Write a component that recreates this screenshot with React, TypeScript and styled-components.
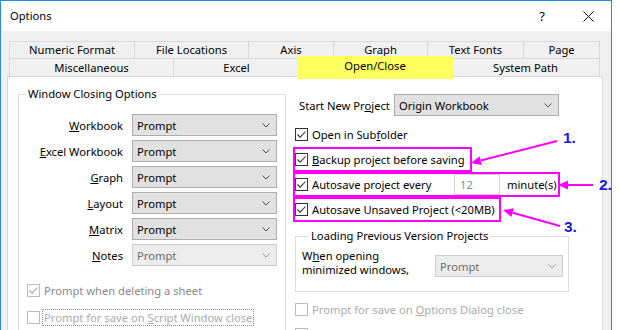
import React from "react";
import styled, { createGlobalStyle } from "styled-components";

const GlobalStyle = createGlobalStyle`
  html, body {
    margin: 0;
    padding: 0;
    background: #fff;
  }
  body {
    font-family: "Noto Sans", "Open Sans", sans-serif;
    font-size: 11.2px;
    color: #000;
    overflow: hidden;
  }
  * {
    box-sizing: border-box;
  }
`;

const Stage = styled.div`
  position: relative;
  width: 620px;
  height: 330px;
  overflow: hidden;
`;

const Window = styled.div`
  width: 612px;
  height: 330px;
  border: 1px solid #2b88d8;
  border-bottom: none;
  background: #f0f0f0;
  display: flex;
  flex-direction: column;
`;

const TitleBar = styled.div`
  flex: 0 0 30px;
  background: #fff;
  display: flex;
  align-items: center;
  padding-left: 9px;
`;

const TitleText = styled.span`
  line-height: 16px;
`;

const CaptionButtons = styled.div`
  margin-left: auto;
  display: flex;
`;

const CaptionButton = styled.div`
  width: 46px;
  height: 30px;
  display: flex;
  align-items: center;
  justify-content: center;
  font-size: 13px;
`;

const Body = styled.div`
  flex: 1;
  display: flex;
  flex-direction: column;
  padding: 10px 0 0 8px;
  min-height: 0;
`;

const TabStrip = styled.div`
  width: 591px;
`;

const TabRow = styled.div<{ $h: number }>`
  display: flex;
  height: ${(p) => p.$h}px;
`;

const Tab = styled.div<{ $w: number; $last?: boolean }>`
  flex: 0 0 ${(p) => p.$w}px;
  border: 1px solid #d9d9d9;
  border-bottom: none;
  border-right: ${(p) => (p.$last ? "1px solid #d9d9d9" : "none")};
  display: flex;
  align-items: center;
  justify-content: center;
  line-height: 16px;
  white-space: nowrap;
`;

const ActiveTab = styled.div<{ $w: number }>`
  position: relative;
  z-index: 2;
  flex: 0 0 ${(p) => p.$w + 4}px;
  margin: -2px -2px 0;
  height: 23px;
  background: #ffff5e;
  display: flex;
  justify-content: center;
  padding-top: 2px;
  line-height: 16px;
`;

const Panel = styled.div`
  flex: 1;
  margin-left: -2px;
  width: 596px;
  border: 1px solid #d9d9d9;
  border-bottom: none;
  background: #fff;
  padding: 9px 0 0 10px;
  display: grid;
  grid-template-columns: 268px 1fr;
  column-gap: 7px;
  align-items: start;
`;

const GroupBox = styled.fieldset<{ $w?: number }>`
  margin: 0;
  padding: 0;
  border: 1px solid #dcdcdc;
  min-width: 0;
  ${(p) => (p.$w ? `width: ${p.$w}px;` : "")}
`;

const GroupTitle = styled.legend`
  margin-left: 7px;
  padding: 0 2px;
  line-height: 16px;
`;

const ClosingBox = styled(GroupBox)`
  padding-bottom: 40px;
`;

const ComboGrid = styled.div`
  display: grid;
  grid-template-columns: 104px 145px;
  grid-auto-rows: 22px;
  column-gap: 9px;
  row-gap: 4px;
  margin-top: 12px;
`;

const FieldLabel = styled.div`
  display: flex;
  align-items: center;
  justify-content: flex-end;
  white-space: nowrap;
`;

const ComboBox = styled.div<{ $w?: number; $disabled?: boolean }>`
  height: 22px;
  ${(p) => (p.$w ? `width: ${p.$w}px;` : "")}
  border: 1px solid ${(p) => (p.$disabled ? "#cccccc" : "#adadad")};
  background: ${(p) => (p.$disabled ? "#ececec" : "#e1e1e1")};
  color: ${(p) => (p.$disabled ? "#6d6d6d" : "#000")};
  display: flex;
  align-items: center;
  justify-content: space-between;
  padding: 0 6px 0 4px;
  white-space: nowrap;
`;

const Chevron = ({ color }: { color: string }) => (
  <svg width="8" height="5" viewBox="0 0 8 5">
    <path d="M0.5 0.5 L4 4 L7.5 0.5" fill="none" stroke={color} strokeWidth="1" />
  </svg>
);

const Combo = ({
  value,
  width,
  disabled,
}: {
  value: string;
  width?: number;
  disabled?: boolean;
}) => (
  <ComboBox $w={width} $disabled={disabled}>
    <span>{value}</span>
    <Chevron color={disabled ? "#9a9a9a" : "#505050"} />
  </ComboBox>
);

const LeftChecks = styled.div`
  display: flex;
  flex-direction: column;
  gap: 9px;
  margin-top: 15px;
  padding-left: 8px;
`;

const LeftCheckRow = styled.div`
  display: flex;
  align-items: center;
  height: 18px;
  gap: 2px;
`;

type Tone = "normal" | "dim" | "faint";

const toneText: Record<Tone, string> = {
  normal: "#000",
  dim: "#8a8a8a",
  faint: "#ababab",
};

const BoxFrame = styled.span<{ $tone: Tone }>`
  flex: 0 0 13px;
  width: 13px;
  height: 13px;
  border: 1px solid ${(p) => (p.$tone === "normal" ? "#333" : "#bcbcbc")};
  background: #fff;
  display: inline-flex;
  align-items: center;
  justify-content: center;
`;

const CheckBox = ({ checked, tone = "normal" }: { checked?: boolean; tone?: Tone }) => (
  <BoxFrame $tone={tone}>
    {checked && (
      <svg width="11" height="11" viewBox="0 0 11 11">
        <path
          d="M1.5 5.5 L4.2 8.2 L9.5 2.5"
          fill="none"
          stroke={tone === "normal" ? "#333" : "#a5a5a5"}
          strokeWidth="1.1"
        />
      </svg>
    )}
  </BoxFrame>
);

const CheckText = styled.span<{ $tone: Tone; $focus?: boolean; $w?: number }>`
  color: ${(p) => toneText[p.$tone]};
  border: 1px ${(p) => (p.$focus ? "dotted #8c8c8c" : "solid transparent")};
  padding: 0 1px;
  line-height: 15px;
  white-space: nowrap;
  ${(p) => (p.$w ? `width: ${p.$w}px;` : "")}
`;

const RightCol = styled.div`
  display: flex;
  flex-direction: column;
  align-items: flex-start;
`;

const StartRow = styled.div`
  display: flex;
  align-items: center;
  gap: 5px;
  margin-top: 8px;
  padding-left: 6px;
`;

const StartLabel = styled.span`
  width: 90px;
  white-space: nowrap;
`;

const CheckRow = styled.div<{ $hl?: boolean; $mt?: number; $pr?: number }>`
  display: flex;
  align-items: center;
  height: 25px;
  gap: 2px;
  margin-top: ${(p) => p.$mt ?? 0}px;
  border: 2px solid ${(p) => (p.$hl ? "#ff00ff" : "transparent")};
  padding-right: ${(p) => p.$pr ?? 3}px;
`;

const NumberField = styled.div`
  width: 46px;
  height: 21px;
  margin-left: 2px;
  border: 1px solid #d4d4d4;
  background: #fff;
  color: #8c8c8c;
  display: flex;
  align-items: center;
  padding-left: 5px;
`;

const Unit = styled.span`
  margin-left: 5px;
  white-space: nowrap;
`;

const LoadingBox = styled(GroupBox)`
  margin: 6px 0 0 2px;
  padding: 5px 5px 14px 6px;
`;

const LoadingRow = styled.div`
  display: flex;
  align-items: flex-end;
  justify-content: space-between;
`;

const TwoLine = styled.div`
  line-height: 14px;
`;

const Overlay = styled.svg`
  position: absolute;
  left: 0;
  top: 0;
  pointer-events: none;
`;

const NumberMark = styled.text`
  font-family: "Liberation Sans", Arial, sans-serif;
  font-weight: 700;
  font-size: 15.5px;
  fill: #1a1ae0;
`;

const row1 = [
  { label: "Numeric Format", w: 125 },
  { label: "File Locations", w: 114 },
  { label: "Axis", w: 85 },
  { label: "Graph", w: 94 },
  { label: "Text Fonts", w: 96 },
  { label: "Page", w: 77 },
];

const closingRows = [
  { key: "W", rest: "orkbook", pre: "" },
  { key: "E", rest: "xcel Workbook", pre: "" },
  { key: "G", rest: "raph", pre: "" },
  { key: "L", rest: "ayout", pre: "" },
  { key: "M", rest: "atrix", pre: "" },
  { key: "N", rest: "otes", pre: "", disabled: true },
];

const Arrow = ({ from, tip }: { from: [number, number]; tip: [number, number] }) => {
  const dx = tip[0] - from[0];
  const dy = tip[1] - from[1];
  const len = Math.hypot(dx, dy);
  const ux = dx / len;
  const uy = dy / len;
  const bx = tip[0] - ux * 10;
  const by = tip[1] - uy * 10;
  const px = -uy * 4.5;
  const py = ux * 4.5;
  return (
    <g>
      <line x1={from[0]} y1={from[1]} x2={bx} y2={by} stroke="#ff00ff" strokeWidth="2" />
      <polygon
        points={`${tip[0]},${tip[1]} ${bx + px},${by + py} ${bx - px},${by - py}`}
        fill="#ff00ff"
      />
    </g>
  );
};

export default function App() {
  return (
    <Stage>
      <GlobalStyle />
      <Window>
        <TitleBar>
          <TitleText>Options</TitleText>
          <CaptionButtons>
            <CaptionButton>?</CaptionButton>
            <CaptionButton>
              <svg width="11" height="11" viewBox="0 0 11 11">
                <path d="M0.5 0.5 L10.5 10.5 M10.5 0.5 L0.5 10.5" stroke="#111" strokeWidth="1" />
              </svg>
            </CaptionButton>
          </CaptionButtons>
        </TitleBar>

        <Body>
          <TabStrip>
            <TabRow $h={17}>
              {row1.map((t, i) => (
                <Tab key={t.label} $w={t.w} $last={i === row1.length - 1}>
                  {t.label}
                </Tab>
              ))}
            </TabRow>
            <TabRow $h={18}>
              <Tab $w={164}>Miscellaneous</Tab>
              <Tab $w={126}>Excel</Tab>
              <ActiveTab $w={152}>Open/Close</ActiveTab>
              <Tab $w={149} $last>
                System Path
              </Tab>
            </TabRow>
          </TabStrip>

          <Panel>
            <ClosingBox>
              <GroupTitle>Window Closing Options</GroupTitle>
              <ComboGrid>
                {closingRows.map((r) => (
                  <React.Fragment key={r.key}>
                    <FieldLabel>
                      <span>
                        <u>{r.key}</u>
                        {r.rest}
                      </span>
                    </FieldLabel>
                    <Combo value="Prompt" disabled={r.disabled} />
                  </React.Fragment>
                ))}
              </ComboGrid>
              <LeftChecks>
                <LeftCheckRow>
                  <CheckBox checked tone="dim" />
                  <CheckText $tone="dim">Prompt when deleting a sheet</CheckText>
                </LeftCheckRow>
                <LeftCheckRow>
                  <CheckBox tone="faint" />
                  <CheckText $tone="faint" $focus>
                    Prompt for save on <u>S</u>cript Window close
                  </CheckText>
                </LeftCheckRow>
              </LeftChecks>
            </ClosingBox>

            <RightCol>
              <StartRow>
                <StartLabel>
                  Start New Pr<u>o</u>ject
                </StartLabel>
                <Combo value="Origin Workbook" width={165} />
              </StartRow>

              <CheckRow $mt={6}>
                <CheckBox checked />
                <CheckText $tone="normal">
                  Open in Sub<u>f</u>older
                </CheckText>
              </CheckRow>
              <CheckRow $hl>
                <CheckBox checked />
                <CheckText $tone="normal">
                  <u>B</u>ackup project before saving
                </CheckText>
              </CheckRow>
              <CheckRow $hl $pr={1}>
                <CheckBox checked />
                <CheckText $tone="normal" $w={140}>
                  Autosave project every
                </CheckText>
                <NumberField>12</NumberField>
                <Unit>minute(s)</Unit>
              </CheckRow>
              <CheckRow $hl $pr={2}>
                <CheckBox checked />
                <CheckText $tone="normal">Autosave Unsaved Project (&lt;20MB)</CheckText>
              </CheckRow>

              <LoadingBox $w={274}>
                <GroupTitle>Loading Previous Version Projects</GroupTitle>
                <LoadingRow>
                  <TwoLine>
                    W<u>h</u>en opening
                    <br />
                    minimized windows,
                  </TwoLine>
                  <Combo value="Prompt" width={128} disabled />
                </LoadingRow>
              </LoadingBox>

              <CheckRow $mt={5}>
                <CheckBox tone="faint" />
                <CheckText $tone="faint">
                  Prompt for save on <u>O</u>ptions Dialog close
                </CheckText>
              </CheckRow>
              <CheckRow>
                <CheckBox tone="faint" />
              </CheckRow>
            </RightCol>
          </Panel>
        </Body>
      </Window>

      <Overlay width="620" height="330" viewBox="0 0 620 330">
        <Arrow from={[557, 141]} tip={[471, 163]} />
        <Arrow from={[593, 185]} tip={[558, 185]} />
        <Arrow from={[560, 226]} tip={[503, 210]} />
        <NumberMark x="563" y="143">1.</NumberMark>
        <NumberMark x="599" y="190">2.</NumberMark>
        <NumberMark x="564" y="232">3.</NumberMark>
      </Overlay>
    </Stage>
  );
}
